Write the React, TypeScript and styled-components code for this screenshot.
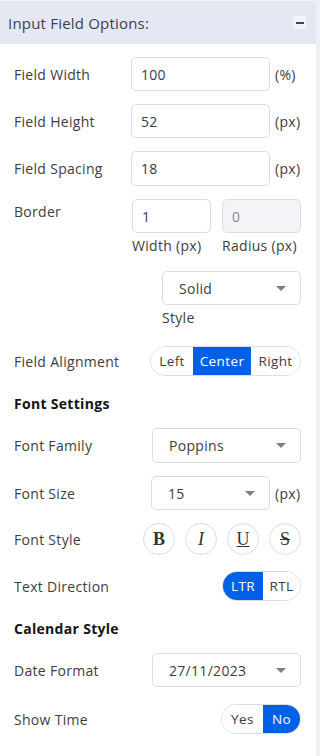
import React from "react";
import styled, { createGlobalStyle } from "styled-components";

const Global = createGlobalStyle`
  html, body { margin: 0; padding: 0; background: #eef0f3; }
  body { font-family: "Open Sans", "Inter", sans-serif; letter-spacing: 0.3px; }
  * { box-sizing: border-box; }
`;

const Panel = styled.div`
  width: 316px;
  height: 756px;
  background: #ffffff;
  border-top: 1px solid #f3f4f7;
  display: flex;
  flex-direction: column;
`;

const Header = styled.div`
  height: 43px;
  background: #e3e8f2;
  display: flex;
  align-items: center;
  justify-content: space-between;
  padding: 0 10px 0 8px;
`;

const HeaderTitle = styled.span`
  font-size: 15px;
  color: #3f3f46;
  letter-spacing: 0.2px;
`;

const Collapse = styled.span`
  width: 13px;
  height: 13px;
  background: #f1f4fa;
  display: flex;
  align-items: center;
  justify-content: center;
  &::after {
    content: "";
    width: 8px;
    height: 2px;
    background: #444;
  }
`;

const Body = styled.div`
  padding: 13px 15px 0 14px;
  display: flex;
  flex-direction: column;
`;

const Row = styled.div<{ $gap?: number; $top?: boolean }>`
  display: flex;
  justify-content: space-between;
  align-items: ${(p) => (p.$top ? "flex-start" : "center")};
  margin-bottom: ${(p) => p.$gap ?? 13}px;
`;

const Label = styled.span<{ $pt?: number }>`
  font-size: 14px;
  color: #3d3d3d;
  padding-top: ${(p) => p.$pt ?? 0}px;
`;

const Heading = styled.div<{ $gap: number }>`
  font-size: 14px;
  font-weight: 700;
  color: #141414;
  line-height: 20px;
  margin-bottom: ${(p) => p.$gap}px;
`;

const Group = styled.div`
  display: flex;
  align-items: center;
  gap: 5px;
`;

const Input = styled.div<{ $w: number; $h?: number; $disabled?: boolean }>`
  width: ${(p) => p.$w}px;
  height: ${(p) => p.$h ?? 34}px;
  border: 1px solid #dcdde2;
  border-radius: 5px;
  background: ${(p) => (p.$disabled ? "#f3f4f8" : "#fff")};
  color: ${(p) => (p.$disabled ? "#8a8a8a" : "#3d3d3d")};
  font-size: 14px;
  display: flex;
  align-items: center;
  padding-left: 9px;
`;

const Unit = styled.span`
  font-size: 14px;
  color: #3d3d3d;
  min-width: 26px;
`;

const Select = styled.div<{ $w: number; $h?: number }>`
  width: ${(p) => p.$w}px;
  height: ${(p) => p.$h ?? 34}px;
  border: 1px solid #dcdde2;
  border-radius: 5px;
  background: #fff;
  color: #3d3d3d;
  font-size: 14px;
  display: flex;
  align-items: center;
  justify-content: space-between;
  padding: 0 14px 0 16px;
  &::after {
    content: "";
    border-left: 5px solid transparent;
    border-right: 5px solid transparent;
    border-top: 5px solid #7d7f88;
  }
`;

const Stack = styled.div`
  display: flex;
  flex-direction: column;
`;

const Pair = styled.div`
  display: flex;
  gap: 11px;
`;

const SubLabel = styled.span<{ $w?: number }>`
  width: ${(p) => (p.$w ? `${p.$w}px` : "auto")};
  font-size: 14px;
  color: #3d3d3d;
  line-height: 20px;
  margin-top: 3px;
  white-space: nowrap;
`;

const Segmented = styled.div<{ $w: number }>`
  width: ${(p) => p.$w}px;
  height: 30px;
  border: 1px solid #dcdde2;
  border-radius: 15px;
  overflow: hidden;
  display: flex;
`;

const Seg = styled.span<{ $active?: boolean; $w: number }>`
  width: ${(p) => p.$w}px;
  display: flex;
  align-items: center;
  justify-content: center;
  font-size: 13.5px;
  letter-spacing: 0.4px;
  background: ${(p) => (p.$active ? "#0061e6" : "#fff")};
  color: ${(p) => (p.$active ? "#fff" : "#3d3d3d")};
`;

const Circles = styled.div`
  display: flex;
  gap: 10px;
`;

const Circle = styled.span<{ $style: "b" | "i" | "u" | "s" }>`
  width: 32px;
  height: 32px;
  border-radius: 50%;
  border: 1px solid #dcdde2;
  display: flex;
  align-items: center;
  justify-content: center;
  font-family: "Liberation Serif", "DejaVu Serif", serif;
  font-size: 18px;
  letter-spacing: 0;
  color: #333;
  font-weight: ${(p) => (p.$style === "b" ? 700 : 400)};
  font-style: ${(p) => (p.$style === "i" ? "italic" : "normal")};
  text-decoration: ${(p) =>
    p.$style === "u" ? "underline" : p.$style === "s" ? "line-through" : "none"};
`;

export default function App() {
  return (
    <>
      <Global />
      <Panel>
        <Header>
          <HeaderTitle>Input Field Options:</HeaderTitle>
          <Collapse />
        </Header>
        <Body>
          <Row>
            <Label>Field Width</Label>
            <Group>
              <Input $w={139}>100</Input>
              <Unit>(%)</Unit>
            </Group>
          </Row>
          <Row>
            <Label>Field Height</Label>
            <Group>
              <Input $w={139}>52</Input>
              <Unit>(px)</Unit>
            </Group>
          </Row>
          <Row>
            <Label>Field Spacing</Label>
            <Group>
              <Input $w={139} $h={35}>18</Input>
              <Unit>(px)</Unit>
            </Group>
          </Row>
          <Row $top $gap={15}>
            <Label $pt={3}>Border</Label>
            <Stack>
              <Pair>
                <Input $w={79}>1</Input>
                <Input $w={79} $disabled>0</Input>
              </Pair>
              <Pair>
                <SubLabel $w={79}>Width (px)</SubLabel>
                <SubLabel $w={79}>Radius (px)</SubLabel>
              </Pair>
            </Stack>
          </Row>
          <Row $top $gap={18}>
            <span />
            <Stack>
              <Select $w={139}>Solid</Select>
              <SubLabel>Style</SubLabel>
            </Stack>
          </Row>
          <Row $gap={18}>
            <Label>Field Alignment</Label>
            <Segmented $w={151}>
              <Seg $w={42}>Left</Seg>
              <Seg $w={58} $active>Center</Seg>
              <Seg $w={49}>Right</Seg>
            </Segmented>
          </Row>
          <Heading $gap={14}>Font Settings</Heading>
          <Row>
            <Label>Font Family</Label>
            <Select $w={149} $h={35}>Poppins</Select>
          </Row>
          <Row>
            <Label>Font Size</Label>
            <Group>
              <Select $w={119}>15</Select>
              <Unit>(px)</Unit>
            </Group>
          </Row>
          <Row $gap={16}>
            <Label>Font Style</Label>
            <Circles>
              <Circle $style="b">B</Circle>
              <Circle $style="i">I</Circle>
              <Circle $style="u">U</Circle>
              <Circle $style="s">S</Circle>
            </Circles>
          </Row>
          <Row $gap={18}>
            <Label>Text Direction</Label>
            <Segmented $w={79}>
              <Seg $w={40} $active>LTR</Seg>
              <Seg $w={37}>RTL</Seg>
            </Segmented>
          </Row>
          <Heading $gap={14}>Calendar Style</Heading>
          <Row $gap={17}>
            <Label>Date Format</Label>
            <Select $w={149}>27/11/2023</Select>
          </Row>
          <Row>
            <Label>Show Time</Label>
            <Segmented $w={80}>
              <Seg $w={41}>Yes</Seg>
              <Seg $w={37} $active>No</Seg>
            </Segmented>
          </Row>
        </Body>
      </Panel>
    </>
  );
}
